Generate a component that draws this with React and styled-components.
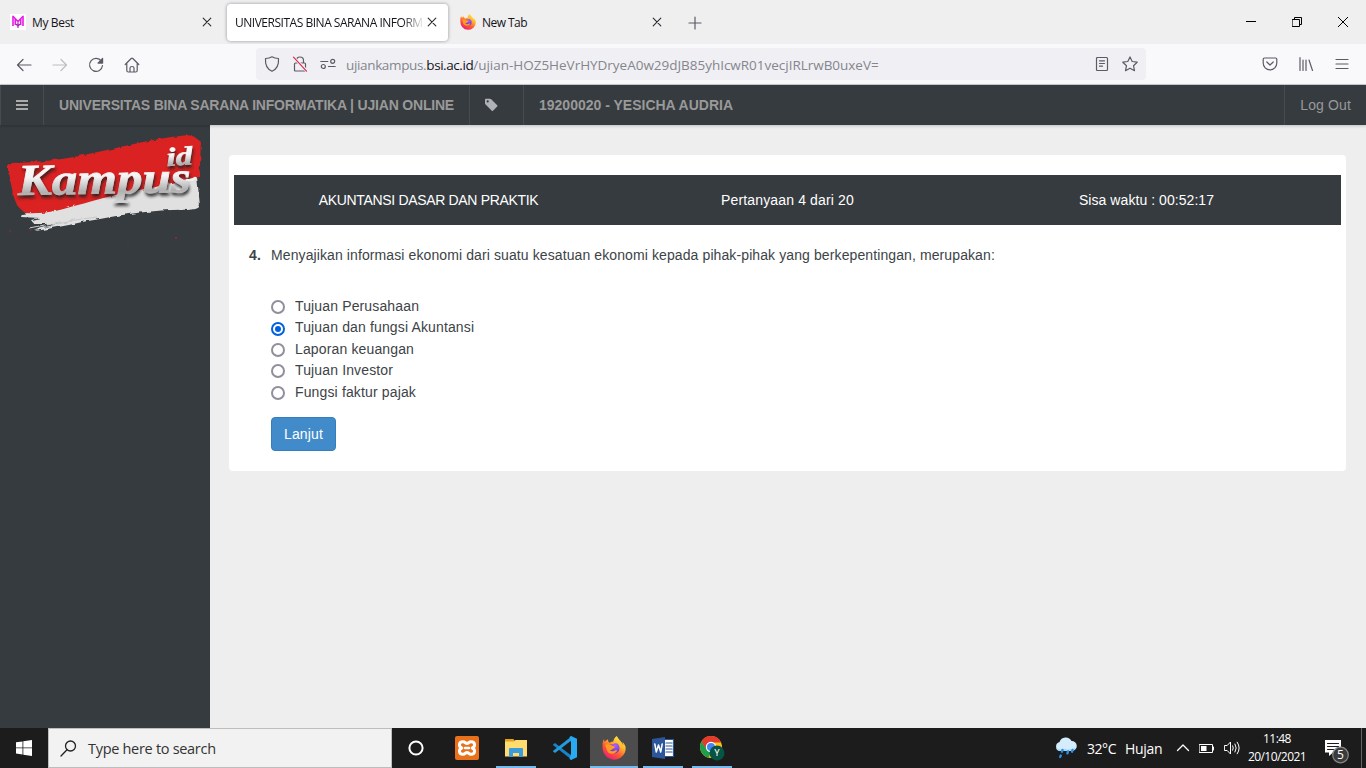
import React from "react";
import styled, { createGlobalStyle, css } from "styled-components";

const GlobalStyle = createGlobalStyle`
  * { box-sizing: border-box; }
  body { margin: 0; background: #eee; }
`;

const ui = css`font-family: "Open Sans", "Noto Sans", sans-serif;`;

const Screen = styled.div`
  width: 1366px; height: 768px; overflow: hidden;
  display: flex; flex-direction: column;
  font-family: "Liberation Sans", Arial, sans-serif;
  font-size: 14px; color: #3d4347; white-space: nowrap;
`;

const Text = styled.span`
  letter-spacing: ${(p) => p.$ls || 0}px;
  margin-left: ${(p) => p.$ml || 0}px;
`;

/* Browser chrome */
const TabStrip = styled.header`
  ${ui}
  height: 44px; background: #efefef; display: flex; align-items: center; flex: none;
  font-size: 12px; color: #15141a; padding-left: 2px;
`;
const Tab = styled.div`
  width: 221px; height: 37px; margin-right: 4px; padding: 0 11px 0 8px;
  display: flex; align-items: center; gap: 6px; border-radius: 4px;
  ${(p) => p.$active && `background: #fff; box-shadow: 0 0 3px 1px #b9b9c0;`}
`;
const TabTitle = styled.div`
  flex: 1; min-width: 0; line-height: 20px; padding-top: 2px; letter-spacing: ${(p) => p.$ls}px;
  ${(p) => p.$fade && `margin-right: -4px; mask-image: linear-gradient(90deg, #000 88%, transparent);`}
`;
const NewTab = styled.div`display: flex; margin-left: 11px; flex: 1; padding-top: 1px;`;
const WindowButtons = styled.div`display: flex;`;
const WindowButton = styled.div`width: 46px; display: flex; justify-content: center;`;

const Toolbar = styled.nav`
  ${ui}
  height: 41px; background: #f9f9fb; border-bottom: 1px solid #cccccc; flex: none;
  display: flex; align-items: center; padding: 0 16px;
`;
const NavButtons = styled.div`display: flex; gap: 20px; width: 240px; padding-top: 1px;`;
const AddressBar = styled.div`
  width: 890px; height: 32px; border-radius: 4px; background: #f0f0f4;
  display: flex; align-items: center; padding: 0 8px; gap: 12px;
`;
const Url = styled.div`
  flex: 1; font-size: 13.5px; line-height: 20px; color: #85858d;
  margin-left: -2px; padding-top: 2px;
`;
const Domain = styled(Text)`color: #15141a;`;
const ToolbarEnd = styled.div`display: flex; gap: 20px; margin-left: auto;`;

/* Exam site */
const SiteNav = styled.nav`
  height: 40px; background: #363b3f; flex: none; display: flex; color: #999;
  position: relative; box-shadow: 0 1px 3px rgba(0,0,0,.2); line-height: 40px;
`;
const NavCell = styled.div`
  padding: 0 15px; border-left: 1px solid #464b4f; display: flex; align-items: center;
  width: ${(p) => (p.$width ? p.$width + "px" : "auto")};
  font-weight: ${(p) => (p.$bold ? 700 : 400)};
  ${(p) => p.$end && `margin-left: auto;`}
`;
const Body = styled.div`flex: 1; min-height: 0; display: flex;`;
const Sidebar = styled.aside`width: 210px; background: #363b3f; flex: none;`;
const Main = styled.main`flex: 1; background: #eee; padding: 30px 20px 0 19px;`;
const Card = styled.section`background: #fff; border-radius: 4px; padding: 20px 5px; height: 316px;`;
const ExamBar = styled.div`
  height: 50px; background: #363b3f; color: #fff; padding: 0 15px;
  display: grid; grid-template-columns: repeat(3, 1fr); align-items: center; text-align: center;
`;
const Question = styled.div`
  display: flex; padding: 20px 15px 0; line-height: 20px; letter-spacing: .103px;
`;
const Number = styled.b`width: 22px;`;
const Options = styled.ul`
  list-style: none; margin: 31px 0 14px; padding: 0 0 0 37px; letter-spacing: .14px;
`;
const Option = styled.li`
  display: flex; align-items: center; gap: 10px; height: 21.4px; line-height: 21.4px;
`;
const Radio = styled.span`
  width: 14px; height: 14px; border-radius: 50%; margin-top: 1px; background: #fff;
  border: 2px solid ${(p) => (p.$on ? "#0060df" : "#8f8f9d")};
  display: grid; place-items: center;
  &::after { content: ""; width: 6px; height: 6px; border-radius: 50%; background: ${(p) => (p.$on ? "#0060df" : "transparent")}; }
`;
const NextButton = styled.button`
  margin-left: 37px; width: 65px; height: 34px; border: 1px solid #357ebd; border-radius: 4px;
  background: #428bca; color: #fff; font: inherit; letter-spacing: .15px; padding: 0; display: block;
`;

/* Taskbar */
const Taskbar = styled.footer`
  ${ui}
  height: 40px; background: #1c1c1c; flex: none; display: flex; color: #fff;
`;
const TaskItem = styled.div`
  width: ${(p) => p.$width || 48}px; margin-right: ${(p) => p.$gap || 0}px;
  display: flex; align-items: center; justify-content: center;
  background: ${(p) => (p.$active ? "#4d4d4d" : "none")};
  ${(p) => p.$open && `box-shadow: inset 0 -2px #76b9ed;`}
`;
const Search = styled.div`
  width: 344px; background: #f2f2f2; border: 1px solid #bdbdbd; color: #333;
  display: flex; align-items: center; gap: 11px; padding-left: 11px; font-size: 14.5px;
`;
const Tray = styled.div`margin-left: auto; display: flex; align-items: center;`;
const Weather = styled.div`display: flex; align-items: center; width: 121px; font-size: 14px;`;
const TrayIcons = styled.div`display: flex; align-items: center; gap: 9px; width: 65px;`;
const Clock = styled.div`
  width: 72px; font-size: 12px; line-height: 18px; text-align: center;
`;
const Notices = styled.div`width: 48px; padding: 6px 0 0 12px; display: flex;`;
const PeekEdge = styled.div`width: 5px; height: 40px; border-left: 1px solid #656565;`;

const Svg = ({ w = 16, h, box, children, stroke = "#5b5b66", sw = 1.2, fill = "none" }) => (
  <svg width={w} height={h || w} viewBox={box || `0 0 ${w} ${h || w}`} fill={fill} stroke={stroke}
    strokeWidth={sw} strokeLinecap="round" strokeLinejoin="round" display="block" flex="none">
    {children}
  </svg>
);

const Close = () => <Svg w={10} stroke="#2b2a33" sw={1.1}><path d="M1.2 1.2l7.6 7.6M8.8 1.2L1.2 8.8" /></Svg>;

const Firefox = ({ size, id }) => (
  <Svg w={size} box="0 0 24 24" stroke="none">
    <defs>
      <linearGradient id={`${id}a`} x1=".85" y1="0" x2=".2" y2="1">
        <stop offset="0" stopColor="#fff44f" /><stop offset=".35" stopColor="#ffb42a" />
        <stop offset=".65" stopColor="#ff5436" /><stop offset="1" stopColor="#e9157f" />
      </linearGradient>
      <radialGradient id={`${id}b`} cx=".6" cy=".2" r=".9">
        <stop offset="0" stopColor="#b15cff" /><stop offset="1" stopColor="#5134c5" />
      </radialGradient>
    </defs>
    <path fill={`url(#${id}a)`} d="M22.8 9.1c-.5-1.3-1.6-2.6-2.5-3.1.7 1.4 1 2.4 1 3.2-1.4-3.4-3.7-4.8-5.6-7.8L14.8 0c-2.5 1.5-3.4 4-3.4 5.5-1.4.1-2.6.5-3.6 1.2C5.9 6.1 6 4 6.1 3.2 4.3 4 3.3 5.1 2.7 5.8c-.7-1.1-.6-2.2-.4-3C.9 4.6.2 7.7.6 11A11.7 11.7 0 0 0 12 23.7c6.5 0 11.7-5.3 11.7-11.5 0-1.1-.3-2.2-.9-3.1z" />
    <path fill={`url(#${id}b)`} d="M7.6 8.8c1.2-.6 2.4-.4 3.5-.5 2.700-2.300 6.400-.3 6.400 4 0 3.200-2.500 5-5.200 5-3.500 0-5.500-2-5.300-4.700 1.300.9 2.400.7 3.300-.2.8-.7 2-.7 2.100-1.200 0-.6-.9-.6-1.500-1.200-.8-.8-2.200-1-3.300-1.200z" />
    <path fill="#ff9b20" d="M3 9.100c1.800-1.300 4-1.100 5.300-.1 1.300.8 3.600 1.200 4.400 1.400.4.3.2 1.300-1.600 2.100-1.100.6-1.300 1.800-3.300 1.500 1.400 1.600 3.800 1.500 5.200.6 1-.6 1.800-.5 2.300 0-1.400 3.200-5.800 4.300-9.200 1.600C4.200 14.400 4.400 11 3 9.100z" />
  </Svg>
);

const MyBest = () => (
  <Svg w={16} stroke="#e51be5" sw={1.6}>
    <rect width="16" height="16" fill="#fff" stroke="none" />
    <path d="M3 2.500v9.500M13 2.500v9.500M5.300 5v6M10.700 5v6" strokeLinecap="butt" />
    <path d="M3 2.300L8 7.500l5-5.200" strokeWidth="1.500" />
    <path d="M8 8.500v5M6.500 10.500L8 12l1.500-1.500" stroke="#a823ae" strokeWidth="1.200" />
  </Svg>
);

const Logo = () => (
  <svg width="210" height="125" viewBox="0 0 210 125" display="block">
    <defs>
      <filter id="rough" x="-5%" y="-10%" width="110%" height="120%">
        <feTurbulence type="fractalNoise" baseFrequency=".13" numOctaves="3" result="n" />
        <feDisplacementMap in="SourceGraphic" in2="n" scale="4" />
      </filter>
      <linearGradient id="metal" x1="0" y1="0" x2="0" y2="1">
        <stop offset="0" stopColor="#fff" /><stop offset=".45" stopColor="#f4f4f4" /><stop offset=".75" stopColor="#b0b0b0" /><stop offset="1" stopColor="#d8d8d8" />
      </linearGradient>
      <filter id="drop" x="-10%" y="-20%" width="120%" height="150%">
        <feDropShadow dx="1" dy="3" stdDeviation="1.5" floodColor="#222" floodOpacity=".85" />
      </filter>
    </defs>
    <g filter="url(#rough)">
      <path fill="#e0e0e0" d="M22 89C55 83 80 76 109 68c31-4 60-12 88-16l3 29c-3 4-8 3-12 4-25-1-62 4-88 9-20 3-38 8-65 12 5-3 13-5 24-7H34l-3-4 9-2-19-1z" />
      <path fill="#da2020" d="M8 42q2-5 10-4l15-1C85 34 132 16 180 11q10-2 15 1l6 5c-1 10 0 23-2 35-21 3-32 8-48 11-29 4-50 11-77 18-17 5-29 8-48 7-8-4-12-12-14-24-1-7-5-15-4-22z" />
      <path d="M30 104l42-8M46 99l51-7" stroke="#c8c8c8" strokeWidth="1.2" fill="none" />
    </g>
    <g filter="url(#drop)" fill="url(#metal)" stroke="url(#metal)" strokeWidth=".7" fontFamily='"Liberation Serif", serif' fontStyle="italic" fontWeight="700">
      <text x="18" y="70" fontSize="44" textLength="173" lengthAdjust="spacingAndGlyphs" transform="rotate(-1 18 70)">Kampus</text>
      <text x="167" y="41" fontSize="26" textLength="26" lengthAdjust="spacingAndGlyphs" transform="rotate(-4 167 41)">id</text>
    </g>
    <path d="M187 55q5 1 8-2" stroke="#eee" strokeWidth="2.500" strokeLinecap="round" fill="none" />
    <g fill="#a92429"><circle cx="10" cy="106" r=".8" /><circle cx="31" cy="105" r=".7" /><circle cx="176" cy="113" r="1.1" /><circle cx="128" cy="118" r=".6" /></g>
  </svg>
);

const options = ["Tujuan Perusahaan", "Tujuan dan fungsi Akuntansi", "Laporan keuangan", "Tujuan Investor", "Fungsi faktur pajak"];

function BrowserTabs() {
  return (
    <TabStrip>
      <Tab><MyBest /><TabTitle $ls={-0.35}>My Best</TabTitle><Close /></Tab>
      <Tab $active><TabTitle $ls={-0.48} $fade>UNIVERSITAS BINA SARANA INFORM</TabTitle><Close /></Tab>
      <Tab><Firefox size={16} id="tab" /><TabTitle $ls={-0.55}>New Tab</TabTitle><Close /></Tab>
      <NewTab><Svg w={14}><path d="M7 1v12M1 7h12" /></Svg></NewTab>
      <WindowButtons>
        <WindowButton><Svg w={10} stroke="#000" sw={1}><path d="M0 4.5h10" strokeLinecap="butt" /></Svg></WindowButton>
        <WindowButton><Svg w={10} stroke="#000" sw={1}><path d="M.5 2.5h7v7h-7zM2.5 2.5v-2h7v7h-2" /></Svg></WindowButton>
        <WindowButton><Svg w={10} stroke="#000" sw={1}><path d="M0 0l10 10M10 0L0 10" /></Svg></WindowButton>
      </WindowButtons>
    </TabStrip>
  );
}

function BrowserToolbar() {
  return (
    <Toolbar>
      <NavButtons>
        <Svg><path d="M15 8H1.500M7 2.500L1.500 8 7 13.500" /></Svg>
        <Svg stroke="#bdbdc3"><path d="M1 8h13.500M9 2.500L14.500 8 9 13.500" /></Svg>
        <Svg><path d="M13.400 4.200A6.500 6.500 0 1 0 14.500 8.500" /><path d="M14.600 1.500v4.600H10z" fill="#5b5b66" /></Svg>
        <Svg><path d="M1.200 7.500L7.200 1.500q.8-.7 1.600 0l6 6M2.800 6.500v7q0 1.500 1.500 1.500h7.400q1.500 0 1.500-1.500v-7M6 15v-4q0-1.500 2-1.500t2 1.500v4" /></Svg>
      </NavButtons>
      <AddressBar>
        <Svg><path d="M8 .8c2 1.300 4 1.700 6.500 1.700C15 9 12 13.500 8 15.300 4 13.500 1 9 1.500 2.500 4 2.500 6 2.100 8 .8z" /></Svg>
        <Svg><path d="M4.500 7V4.500a3.500 3.500 0 0 1 7 0V7M3.500 7h9q1 0 1 1v6q0 1-1 1h-9q-1 0-1-1V8q0-1 1-1z" /><path d="M1 1l14 14" stroke="#f0f0f4" strokeWidth="3" /><path d="M1.500 1.200l13 14" stroke="#e22850" /></Svg>
        <Svg><path d="M.8 5.500h7M8.500 10.500h6.700" /><circle cx="12.700" cy="5.300" r="2" /><circle cx="3.300" cy="10.500" r="2" /></Svg>
        <Url>
          <Text $ls={-0.35}>ujiankampus.</Text><Domain $ls={-0.43}>bsi.ac.id</Domain>
          <Text $ls={-0.02}>/ujian-HOZ5HeVrHYDryeA0w29dJB85yhIcwR01vecjIRLrwB0uxeV=</Text>
        </Url>
        <Svg><path d="M3.500 1.500h9q1 0 1 1v11q0 1-1 1h-9q-1 0-1-1v-11q0-1 1-1zM5.500 4.800h5M5.500 7.500h5M5.500 10.200h3" /></Svg>
        <Svg><path d="M8 .9l2.200 4.600 5 .7-3.700 3.500 1 5L8 12.200l-4.500 2.500 1-5L.8 6.200l5-.7z" /></Svg>
      </AddressBar>
      <ToolbarEnd>
        <Svg><path d="M2.500 2h11q1.300 0 1.300 1.300V7a6.800 6.800 0 0 1-13.600 0V3.300Q1.200 2 2.500 2zM4.800 6L8 9l3.200-3" /></Svg>
        <Svg><path d="M2 1.500v13M5 4v10.500M8 4v10.500M11 4l3.500 10.500" /></Svg>
        <Svg><path d="M2 3.500h12M2 8h12M2 12.500h12" /></Svg>
      </ToolbarEnd>
    </Toolbar>
  );
}

function SiteHeader() {
  return (
    <SiteNav>
      <NavCell $width={43}><Svg w={12} stroke="#aaa" sw={2}><path d="M0 2h12M0 6h12M0 10h12" strokeLinecap="butt" /></Svg></NavCell>
      <NavCell $width={426} $bold><Text $ls={-0.195}>UNIVERSITAS BINA SARANA INFORMATIKA | UJIAN ONLINE</Text></NavCell>
      <NavCell $width={54}><Svg w={14} stroke="none"><path fill="#b0b3b5" fillRule="evenodd" d="M0 1.500q0-.8.8-.8h4q.8 0 1.400.6l6 6q.6.600 0 1.200l-4.200 4.200q-.6.600-1.200 0L.6 6.600Q0 6 0 5.300zM2.700 2.300a1.100 1.100 0 1 0 0 2.200 1.100 1.100 0 0 0 0-2.200z" /></Svg></NavCell>
      <NavCell $bold>19200020 - YESICHA AUDRIA</NavCell>
      <NavCell $end><Text $ls={0.14}>Log Out</Text></NavCell>
    </SiteNav>
  );
}

function Exam() {
  return (
    <Card>
      <ExamBar>
        <Text $ls={-0.33}>AKUNTANSI DASAR DAN PRAKTIK</Text>
        <Text $ls={0.14}>Pertanyaan 4 dari 20</Text>
        <Text $ls={0.06}>Sisa waktu : 00:52:17</Text>
      </ExamBar>
      <Question><Number>4.</Number>Menyajikan informasi ekonomi dari suatu kesatuan ekonomi kepada pihak-pihak yang berkepentingan, merupakan:</Question>
      <Options>
        {options.map((o, i) => <Option key={o}><Radio $on={i === 1} />{o}</Option>)}
      </Options>
      <NextButton>Lanjut</NextButton>
    </Card>
  );
}

function WindowsTaskbar() {
  return (
    <Taskbar>
      <TaskItem><Svg w={16} stroke="none" fill="#fff"><path d="M0 2.300l6.500-.9v6.100H0zM7.300 1.300L16 0v7.500H7.300zM0 8.300h6.500v6.200L0 13.600zM7.300 8.300H16V16l-8.700-1.300z" /></Svg></TaskItem>
      <Search><Svg w={17} stroke="#222" sw={1.300}><circle cx="10.500" cy="6" r="5" /><path d="M7 9.700L1 16" /></Svg><Text $ls={-0.3}>Type here to search</Text></Search>
      <TaskItem $gap={3}><Svg w={16} stroke="#fff" sw={2}><circle cx="8" cy="8" r="6.600" /></Svg></TaskItem>
      <TaskItem $gap={5}>
        <Svg w={24} stroke="#fff" sw={3}><rect width="24" height="24" rx="2" fill="#e9711c" stroke="none" /><path d="M8 5.800c-4.500 0-4.500 5-1.200 6.200-3.300 1.200-3.300 6.200 1.200 6.200 2.200 0 2.400-1.700 4-1.700s1.800 1.700 4 1.700c4.500 0 4.500-5 1.200-6.200 3.300-1.200 3.300-6.200-1.200-6.200-2.200 0-2.400 1.700-4 1.700S10.200 5.800 8 5.800z" /><path d="M10 12h4" strokeWidth="2.500" /></Svg>
      </TaskItem>
      <TaskItem $width={40} $gap={5} $open>
        <Svg w={22} h={20} stroke="none"><path fill="#e2a316" d="M0 1h8.500l1.500 2v4H0z" /><path fill="#ffdc70" d="M0 3.500h9L10.500 2H22v16.500H0z" /><path fill="#3c9bdc" d="M4 11q0-1 1-1h12q1 0 1 1v8h-4v-4H8v4H4z" /></Svg>
      </TaskItem>
      <TaskItem $width={48} $gap={1}>
        <Svg w={24} stroke="none"><path fill="#1783ca" d="M0 8.500l2-1.500 17 13v4L.2 9.300z" /><path fill="#2499db" d="M0 15.500L2 17 19 4V0L.2 14.700z" /><path fill="#29a9f2" d="M18 0l6 2.800v18.400L18 24l-1.500-1L18 18V6l-1.500-5z" /></Svg>
      </TaskItem>
      <TaskItem $active $open $gap={5}><Firefox size={24} id="task" /></TaskItem>
      <TaskItem $width={40} $gap={9} $open>
        <Svg w={22} stroke="none"><path fill="#fff" stroke="#2b579a" d="M12 2.500h9.500v17H12z" /><path stroke="#2b579a" d="M14 6h6M14 9h6M14 12h6M14 15h6" /><path fill="#2b579a" d="M0 2l13-2v22L0 20z" /><path d="M2.800 7l1.500 8L6.500 8l2.200 7 1.500-8" stroke="#fff" strokeWidth="1.500" /></Svg>
      </TaskItem>
      <TaskItem $width={40} $open>
        <Svg w={26} stroke="none">
          <circle cx="12" cy="12" r="11" fill="#fbc118" /><path fill="#e33b2e" d="M2.500 6.500A11 11 0 0 1 22 7.500H12L7 14.500z" /><path fill="#1e9e4a" d="M2.500 6.500L8 15l4 2-2.500 5.700A11 11 0 0 1 2.500 6.500z" /><circle cx="12" cy="12" r="5.200" fill="#fff" /><circle cx="12" cy="12" r="4" fill="#4285f4" /><circle cx="18" cy="18" r="7.500" fill="#075344" />
          <text x="18" y="21.200" textAnchor="middle" fontSize="9" fill="#fff" fontFamily="Roboto">Y</text>
        </Svg>
      </TaskItem>
      <Tray>
        <Weather>
          <Svg w={22} stroke="none"><path fill="#d5ecfc" d="M5 14a4.600 4.600 0 0 1-.5-9A6.500 6.500 0 0 1 16.500 4 5 5 0 0 1 17 14z" /><path fill="#a9d5f4" d="M1 11q3 2.500 8 .7 5 2 11.500-1-1 3.300-4 3.300H5Q2 14 1 11z" /><path stroke="#2791e8" strokeWidth="2.400" d="M7.500 13l-.6 1.700M13 14.500l-.6 1.800M17.500 13l-.5 1.700M5.800 18.500l-.6 1.400" /></Svg>
          <Text $ls={-0.45} $ml={10}>32°C</Text><Text $ls={-0.3} $ml={9}>Hujan</Text>
        </Weather>
        <TrayIcons>
          <Svg w={14} stroke="#fff" sw={1.300}><path d="M1.500 9.500L7 4l5.500 5.500" /></Svg>
          <Svg w={16} h={10} stroke="#fff" sw={1}><path d="M.5 1.500h13v8H.5zM14.500 4v3" strokeLinejoin="miter" /><path fill="#fff" stroke="none" d="M2 3h5.500v5H2z" /></Svg>
          <Svg w={16} stroke="#fff" sw={1}><path d="M.8 5.500h2.400L6.500 2v12L3.200 10.500H.8zM8.700 5.800q1.300 2.200 0 4.400M11 4q2.500 4 0 8M13.200 2.200q4 5.800 0 11.600" /></Svg>
        </TrayIcons>
        <Clock><Text $ls={-0.55}>11:48</Text><br /><Text $ls={-0.55}>20/10/2021</Text></Clock>
        <Notices>
          <Svg w={25} h={26} stroke="none"><path fill="#fff" d="M0 2h16v12.500H8L4 18v-3.500H0z" /><path stroke="#1c1c1c" d="M2.500 5.500h11M2.500 8.500h11M2.500 11.500h6" /><circle cx="15.500" cy="17" r="7.800" fill="#3b3b3b" stroke="#888" /><text x="15.500" y="21.200" textAnchor="middle" fontSize="12" fill="#fff" fontFamily="Open Sans">5</text></Svg>
        </Notices>
        <PeekEdge />
      </Tray>
    </Taskbar>
  );
}

export default function App() {
  return (
    <Screen>
      <GlobalStyle />
      <BrowserTabs />
      <BrowserToolbar />
      <SiteHeader />
      <Body><Sidebar><Logo /></Sidebar><Main><Exam /></Main></Body>
      <WindowsTaskbar />
    </Screen>
  );
}
